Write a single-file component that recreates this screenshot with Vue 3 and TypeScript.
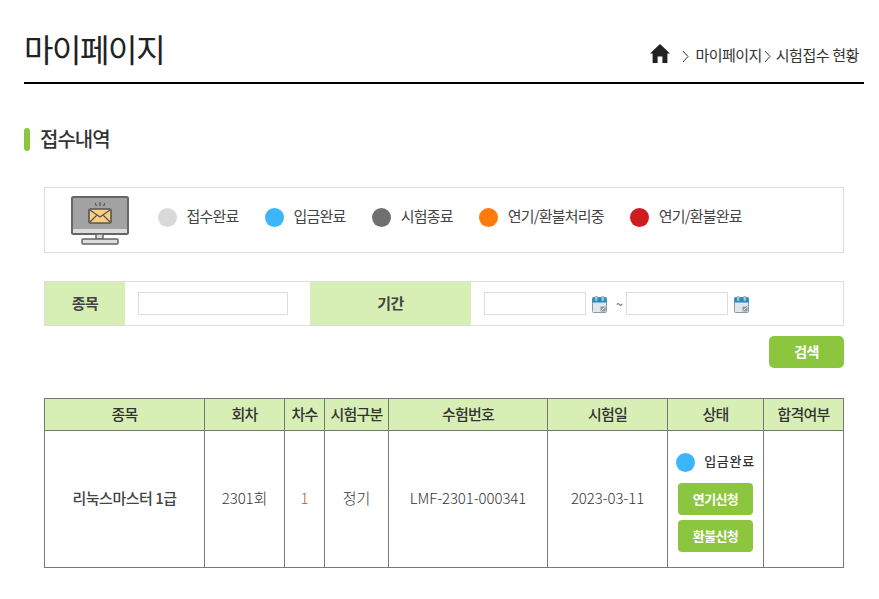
<script setup lang="ts">
const legend = [
  { label: '접수완료', color: '#d9d9d9' },
  { label: '입금완료', color: '#3bb6fb' },
  { label: '시험종료', color: '#6f6f6f' },
  { label: '연기/환불처리중', color: '#ff7a0a' },
  { label: '연기/환불완료', color: '#ce1c1f' },
]
const heads = ['종목', '회차', '차수', '시험구분', '수험번호', '시험일', '상태', '합격여부']
</script>

<template>
  <div class="page">
    <header class="top">
      <h1>마이페이지</h1>
      <nav class="crumb">
        <svg class="home" width="20" height="19" viewBox="0 0 20 19"><path d="M10 0 L20 9.4 L17.4 9.4 L17.4 19 L12.4 19 L12.4 12.5 L7.6 12.5 L7.6 19 L2.6 19 L2.6 9.4 L0 9.4 Z" fill="#222"/></svg>
        <svg class="chev first" width="7" height="13" viewBox="0 0 7 13"><path d="M1 1 L6 6.5 L1 12" fill="none" stroke="#333" stroke-width="1"/></svg>
        <span class="mid">마이페이지</span>
        <svg class="chev" width="7" height="13" viewBox="0 0 7 13"><path d="M1 1 L6 6.5 L1 12" fill="none" stroke="#333" stroke-width="1"/></svg>
        <span class="last">시험접수 현황</span>
      </nav>
    </header>

    <h2 class="section">접수내역</h2>

    <div class="content">
      <div class="legend">
        <svg class="monitor" width="58" height="49" viewBox="0 0 58 49">
          <rect x="1" y="1" width="56" height="37" rx="1.5" fill="#a3a3a3" stroke="#666" stroke-width="2"/>
          <rect x="2" y="33" width="54" height="4" fill="#dcdcdc"/>
          <rect x="25" y="38" width="7" height="5" fill="#dcdcdc" stroke="#666" stroke-width="1.5"/>
          <rect x="11" y="43" width="36" height="5" rx="1" fill="#dcdcdc" stroke="#666" stroke-width="1.5"/>
          <rect x="18" y="13" width="22" height="14" rx="1.5" fill="#fbcf7f" stroke="#555" stroke-width="1.6"/>
          <path d="M19 14 L29 21 L39 14 M19 26 L26 19 M39 26 L32 19" fill="none" stroke="#555" stroke-width="1.2"/>
          <path d="M24 7 L25.5 10 M29 6 L29 10 M34 7 L32.5 10" stroke="#555" stroke-width="1.2"/>
        </svg>
        <div v-for="item in legend" :key="item.label" class="legend-item">
          <i class="dot" :style="{ background: item.color }"></i>
          <span>{{ item.label }}</span>
        </div>
      </div>

      <div class="search">
        <div class="s-label s-kind">종목</div>
        <div class="s-field s-kind-field"><input class="inp wide" type="text" /></div>
        <div class="s-label s-period">기간</div>
        <div class="s-field s-date">
          <input class="inp date" type="text" />
          <svg class="cal" width="15" height="17" viewBox="0 0 15 17">
            <rect x="0.5" y="1.5" width="14" height="15" rx="1" fill="#dfe6ec" stroke="#8a9aa6"/>
            <rect x="0.5" y="1.5" width="14" height="5" fill="#1f8cc8"/>
            <rect x="3" y="0" width="2.4" height="5" rx="1" fill="#b9c4cc" stroke="#8a9aa6" stroke-width=".5"/>
            <rect x="9.6" y="0" width="2.4" height="5" rx="1" fill="#b9c4cc" stroke="#8a9aa6" stroke-width=".5"/>
            <rect x="8.5" y="10.5" width="5" height="5" fill="#8a9aa6"/>
            <path d="M9.5 14.5 L12.5 11.5" stroke="#eee"/>
          </svg>
          <span class="tilde">~</span>
          <input class="inp date" type="text" />
          <svg class="cal" width="15" height="17" viewBox="0 0 15 17">
            <rect x="0.5" y="1.5" width="14" height="15" rx="1" fill="#dfe6ec" stroke="#8a9aa6"/>
            <rect x="0.5" y="1.5" width="14" height="5" fill="#1f8cc8"/>
            <rect x="3" y="0" width="2.4" height="5" rx="1" fill="#b9c4cc" stroke="#8a9aa6" stroke-width=".5"/>
            <rect x="9.6" y="0" width="2.4" height="5" rx="1" fill="#b9c4cc" stroke="#8a9aa6" stroke-width=".5"/>
            <rect x="8.5" y="10.5" width="5" height="5" fill="#8a9aa6"/>
            <path d="M9.5 14.5 L12.5 11.5" stroke="#eee"/>
          </svg>
        </div>
      </div>

      <div class="actions"><button class="btn search-btn" type="button">검색</button></div>

      <table class="grid">
        <colgroup>
          <col class="c160" /><col class="c80" /><col class="c40" /><col class="c64" />
          <col class="c159" /><col class="c120" /><col class="c96" /><col class="c80" />
        </colgroup>
        <thead>
          <tr><th v-for="h in heads" :key="h">{{ h }}</th></tr>
        </thead>
        <tbody>
          <tr>
            <td class="strong">리눅스마스터 1급</td>
            <td>2301회</td>
            <td class="orange">1</td>
            <td>정기</td>
            <td>LMF-2301-000341</td>
            <td>2023-03-11</td>
            <td class="status">
              <div class="state"><i class="dot small"></i><span>입금완료</span></div>
              <button class="btn row-btn" type="button">연기신청</button>
              <button class="btn row-btn" type="button">환불신청</button>
            </td>
            <td></td>
          </tr>
        </tbody>
      </table>
    </div>
  </div>
</template>

<style>
html, body { margin: 0; background: #fff; }
</style>

<style scoped>
.page {
  width: 840px;
  height: 599px;
  margin-left: 24px;
  overflow: hidden;
  font-family: "Noto Sans CJK KR", "Noto Sans", sans-serif;
  color: #333;
  font-size: 14px;
  letter-spacing: -0.6px;
}
.top {
  height: 82px;
  border-bottom: 2px solid #000;
  display: flex;
  justify-content: space-between;
  align-items: flex-end;
}
h1 {
  margin: 0 0 10px;
  font-size: 32px;
  line-height: 48px;
  font-weight: 400;
  color: #222;
  letter-spacing: -1.4px;
}
.crumb {
  display: flex;
  align-items: center;
  margin: 0 5px 17px 0;
  color: #333;
  font-size: 15px;
  line-height: 20px;
  letter-spacing: -0.4px;
}
.mid { letter-spacing: -0.6px; }
.home { margin-right: 12px; margin-top: -4px; }
.chev { margin: 2px 5px 0 2px; }
.chev.first { margin: 2px 7px 0 0; }
.section {
  margin: 43px 0 0;
  height: 23px;
  line-height: 23px;
  font-size: 20px;
  font-weight: 500;
  color: #333;
  padding-left: 16px;
  position: relative;
  letter-spacing: -1px;
}
.section::before {
  content: "";
  position: absolute;
  left: 0;
  top: 1px;
  width: 6px;
  height: 23px;
  border-radius: 3px;
  background: #8cc63f;
}
.content { margin: 37px 20px 0; }
.legend {
  box-sizing: border-box;
  height: 66px;
  border: 1px solid #ddd;
  display: flex;
  align-items: center;
  padding: 0 0 5px 26px;
}
.monitor { margin: 5px 28.6px 0 0; }
.legend-item {
  display: flex;
  align-items: center;
  margin-right: 26px;
  font-size: 15px;
  letter-spacing: -0.8px;
  color: #444;
}
.legend-item span { position: relative; top: -2px; }
.legend-item .dot { margin-right: 10px; }
.dot {
  display: block;
  width: 19px;
  height: 19px;
  border-radius: 50%;
}
.dot.small { background: #3bb6fb; margin-right: 9px; }
.search {
  margin-top: 28px;
  height: 43px;
  border: 1px solid #ddd;
  display: flex;
}
.s-label {
  background: #d7efb5;
  display: flex;
  align-items: center;
  justify-content: center;
  padding-bottom: 3px;
  box-sizing: border-box;
  font-weight: 700;
  font-size: 15px;
  color: #444;
}
.s-kind { width: 80px; }
.s-kind-field { width: 185px; }
.s-period { width: 161px; }
.s-field {
  box-sizing: border-box;
  display: flex;
  align-items: center;
  padding-left: 13px;
}
.inp {
  box-sizing: border-box;
  height: 23px;
  border: 1px solid #ddd;
  background: #fff;
  padding: 0;
  margin: 0;
  outline: none;
}
.wide { width: 150px; }
.date { width: 102px; }
.cal { margin-left: 6px; margin-top: 1px; }
.tilde { margin-left: 9px; width: 10px; font-size: 12px; color: #444; }
.actions { display: flex; justify-content: flex-end; margin-top: 10px; }
.btn {
  border: 0;
  background: #8cc63f;
  color: #fff;
  font-family: inherit;
  font-weight: 700;
  border-radius: 4px;
  padding: 0 0 2px;
  letter-spacing: -0.6px;
}
.search-btn { width: 75px; height: 32px; font-size: 14px; border-radius: 5px; }
.grid {
  margin-top: 30px;
  width: 800px;
  table-layout: fixed;
  border-collapse: collapse;
  border: 1px solid #777;
}
.c160 { width: 160px; }
.c159 { width: 159px; }
.c120 { width: 120px; }
.c96 { width: 96px; }
.c80 { width: 80px; }
.c64 { width: 64px; }
.c40 { width: 40px; }
th, td {
  border: 1px solid #777;
  text-align: center;
  padding: 0;
  color: #333;
}
th {
  height: 29px;
  padding-bottom: 2px;
  background: #d7efb5;
  font-size: 15px;
  font-weight: 500;
  letter-spacing: -0.8px;
}
td {
  height: 133px;
  padding-bottom: 3px;
  font-size: 15px;
  font-weight: 300;
  letter-spacing: -0.1px;
}
td.strong { font-weight: 500; letter-spacing: -0.5px; color: #444; }
td.orange { color: #b8601f; }
td.status { vertical-align: top; padding: 20px 0 0; height: 116px; }
.state {
  display: flex;
  align-items: center;
  justify-content: center;
  height: 22px;
  font-size: 13px;
  margin-bottom: 10px;
  color: #333;
  letter-spacing: 0.7px;
  font-weight: 500;
}
.state span { position: relative; top: -2px; }
.row-btn {
  display: block;
  width: 75px;
  height: 32px;
  margin: 0 auto 5px;
  font-size: 13px;
}
.row-btn:last-child { margin-bottom: 0; }
</style>
